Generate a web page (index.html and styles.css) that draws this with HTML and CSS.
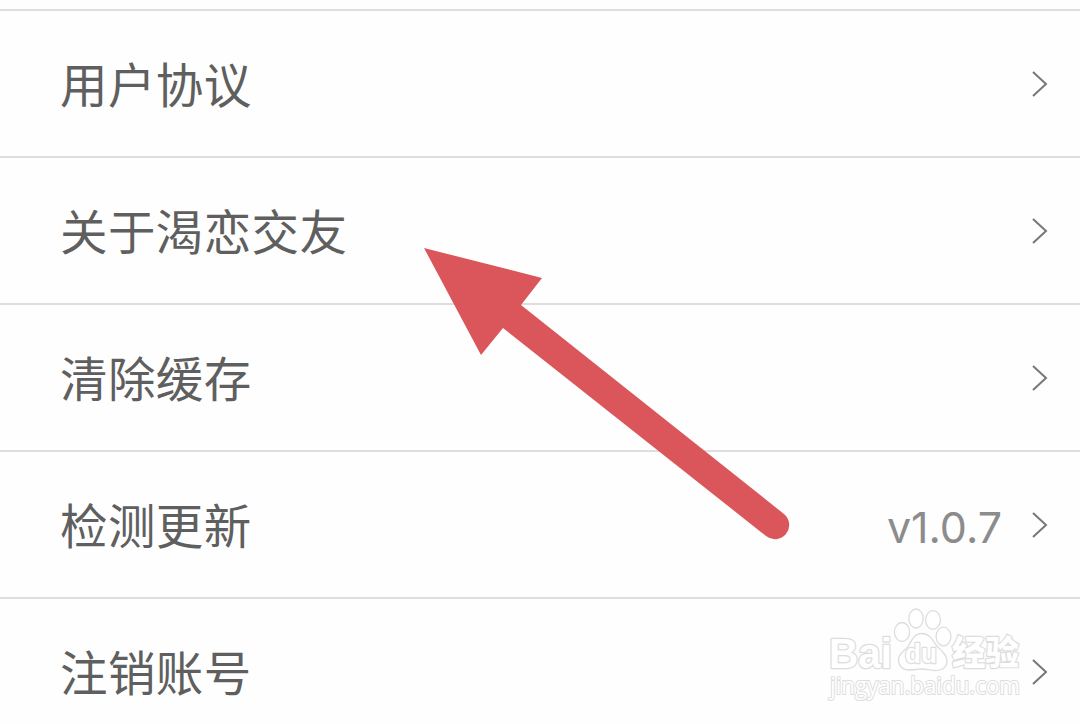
FILE: index.html
```html
<!DOCTYPE html>
<html lang="zh-CN">
<head>
    <meta charset="UTF-8">
    <meta name="viewport" content="width=device-width, initial-scale=1.0">
    <title>设置</title>
    <link rel="stylesheet" href="styles.css">
</head>
<body>
    <div class="settings-list">
        <a class="row">
            <span class="label">用户协议</span>
            <svg class="chevron" viewBox="0 0 16 28"><path d="M1 2 L14 14 L1 26"/></svg>
        </a>
        <a class="row">
            <span class="label">关于渴恋交友</span>
            <svg class="chevron" viewBox="0 0 16 28"><path d="M1 2 L14 14 L1 26"/></svg>
        </a>
        <a class="row">
            <span class="label">清除缓存</span>
            <svg class="chevron" viewBox="0 0 16 28"><path d="M1 2 L14 14 L1 26"/></svg>
        </a>
        <a class="row">
            <span class="label">检测更新</span>
            <span class="version">v1.0.7</span>
            <svg class="chevron" viewBox="0 0 16 28"><path d="M1 2 L14 14 L1 26"/></svg>
        </a>
        <a class="row">
            <span class="label">注销账号</span>
            <svg class="chevron" viewBox="0 0 16 28"><path d="M1 2 L14 14 L1 26"/></svg>
        </a>
    </div>

    <!-- Arrow pointing at the about row -->
    <svg class="arrow" viewBox="0 0 366 292">
        <path d="M0 0 L118 30 L97 57 L360 266 A13.5 13.5 0 0 1 342 288 L79 80 L57 107 Z"/>
    </svg>

    <!-- Watermark -->
    <svg class="watermark" viewBox="0 0 200 100">
        <g class="outline">
            <text class="brand" x="3" y="62" textLength="63" lengthAdjust="spacingAndGlyphs">Bai</text>
            <ellipse cx="76" cy="26" rx="7.6" ry="9.5"/>
            <ellipse cx="90" cy="12.5" rx="7.2" ry="9.5"/>
            <ellipse cx="107" cy="14" rx="7.4" ry="9.3"/>
            <ellipse cx="117.5" cy="30.5" rx="7.4" ry="9.3"/>
            <path d="M96 27.5 C103 27.5 107 34 110 39 C115 45 121 48 121 55 C121 62 115 65 109 64.5 C104 64 101 63 96 63 C91 63 88 64 83 64 C76 64 72 59 72.500 53 C73 47 79 45 83 39 C86 33 89 27.500 96 27.500 Z"/>
            <text class="du" x="79" y="57" textLength="32" lengthAdjust="spacingAndGlyphs">du</text>
            <text class="brand-cn" x="126" y="59" textLength="67" lengthAdjust="spacingAndGlyphs">经验</text>
            <text class="url" x="4" y="88" textLength="190" lengthAdjust="spacingAndGlyphs">jingyan.baidu.com</text>
        </g>
    </svg>
</body>
</html>
```
FILE: styles.css
```css
body {
    margin: 0;
    height: 724px;
    overflow: hidden;
    position: relative;
    background-color: #fefefe;
    color: #5f5f5f;
    font-family: "Noto Sans CJK SC", sans-serif;
}
.settings-list {
    margin-top: 9px;
    border-top: 2px solid #dedede;
}
.row {
    display: flex;
    align-items: center;
    height: 145px;
    padding: 0 32px 0 60px;
    border-bottom: 2px solid #dedede;
}
.label {
    flex: 1;
    font-size: 47.5px;
    line-height: 60px;
    letter-spacing: 0.4px;
    padding-bottom: 2px;
}
.version {
    font-family: "Inter", sans-serif;
    font-size: 43px;
    line-height: 60px;
    color: #8c8c8c;
    margin-right: 30px;
    padding-top: 4px;
}
.chevron {
    width: 16px;
    height: 28px;
    fill: none;
    stroke: #777777;
    stroke-width: 2;
}
.arrow {
    position: absolute;
    left: 424px;
    top: 248px;
    width: 366px;
    height: 292px;
    fill: #da565b;
}
.watermark {
    position: absolute;
    left: 826px;
    top: 606px;
    width: 200px;
    height: 100px;
}
.outline {
    fill: #ffffff;
    stroke: #dddddd;
    stroke-width: 1.3;
}
.outline text {
    paint-order: stroke;
    stroke-linejoin: round;
}
.brand {
    font-family: "Liberation Sans", sans-serif;
    font-weight: bold;
    font-size: 42px;
    stroke-width: 2.6;
}
.du {
    font-family: "Liberation Sans", sans-serif;
    font-weight: bold;
    font-size: 27px;
    stroke-width: 2.4;
}
.brand-cn {
    font-weight: 900;
    font-size: 34px;
    stroke-width: 2.4;
}
.url {
    font-family: "Open Sans", sans-serif;
    font-size: 23px;
    stroke-width: 2;
}
```
